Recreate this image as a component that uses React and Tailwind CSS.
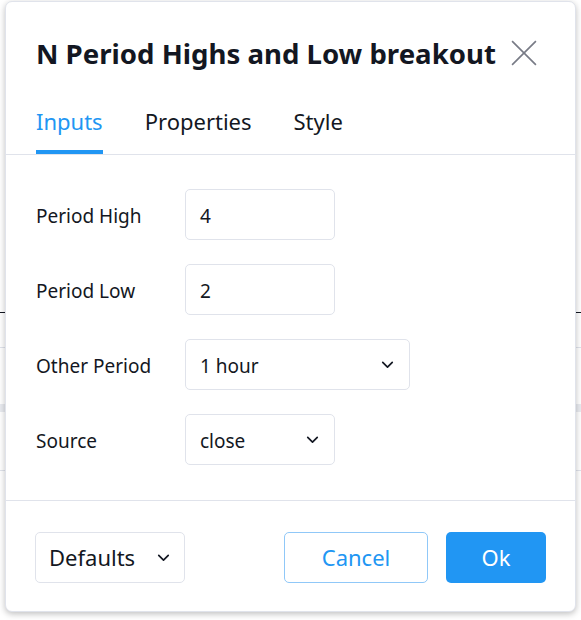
function Chevron({ className }) {
  return (
    <svg viewBox="0 0 18 18" className={className} fill="none" stroke="currentColor" strokeWidth="1.6" strokeLinecap="round" strokeLinejoin="round">
      <path d="M4.5 7l4.5 4.5L13.5 7" />
    </svg>
  )
}

function Row({ label, children }) {
  return (
    <div className="flex items-center h-[51px]">
      <div className="w-[149px] pt-[4px] text-[19px] text-[#131722]">{label}</div>
      {children}
    </div>
  )
}

function TextBox({ value }) {
  return (
    <div className="w-[150px] h-[51px] border border-[#e0e3eb] rounded-[5px] flex items-center px-[14px] pt-[4px] text-[19px] text-[#131722]">
      {value}
    </div>
  )
}

function Select({ value, width }) {
  return (
    <div className={`${width} h-[51px] border border-[#e0e3eb] rounded-[5px] flex items-center justify-between pl-[14px] pr-[12px] text-[19px] text-[#131722]`}>
      <span className="pt-[3px]">{value}</span>
      <Chevron className="w-[19px] h-[19px]" />
    </div>
  )
}

export default function App() {
  return (
    <div className="w-[581px] h-[620px] bg-white relative overflow-hidden" style={{ fontFamily: '"Noto Sans", "Open Sans", sans-serif' }}>
      <div className="absolute left-0 right-0 top-[312px] h-[1px] bg-[#131722]" />
      <div className="absolute left-0 right-0 top-[347px] h-[1px] bg-[#e0e3eb]" />
      <div className="absolute left-0 right-0 top-[404px] h-[8px] bg-[#e9ebf0]" />
      <div className="absolute left-0 right-0 top-[470px] h-[1px] bg-[#e0e3eb]" />
      <div className="absolute left-[5px] top-[1px] w-[571px] h-[611px] bg-white rounded-[7px] border border-[#e0e3eb] shadow-[0_2px_6px_rgba(0,0,0,0.25)] flex flex-col">
        <div className="pl-[30px] pr-[38px] pt-[29px] flex items-center justify-between h-[73px]">
          <div className="text-[27.6px] font-bold text-[#131722] leading-[44px] whitespace-nowrap">N Period Highs and Low breakout</div>
          <svg viewBox="0 0 24 24" className="w-[26px] h-[26px] text-[#787b86] shrink-0" fill="none" stroke="currentColor" strokeWidth="1.5">
            <path d="M1 1l22 22M23 1L1 23" />
          </svg>
        </div>
        <div className="mt-[22px] pl-[30px] flex gap-[42px] border-b border-[#e0e3eb] h-[58px]">
          <div className="h-full flex items-center pb-[4px] border-b-[4px] border-[#2196f3] text-[22px] text-[#2196f3]">Inputs</div>
          <div className="h-full flex items-center pb-[4px] border-b-[4px] border-transparent text-[22px] text-[#131722]">Properties</div>
          <div className="h-full flex items-center pb-[4px] border-b-[4px] border-transparent text-[22px] text-[#131722]">Style</div>
        </div>
        <div className="pl-[30px] pt-[34px] pb-[35px] flex flex-col gap-[24px] border-b border-[#e0e3eb]">
          <Row label="Period High"><TextBox value="4" /></Row>
          <Row label="Period Low"><TextBox value="2" /></Row>
          <Row label="Other Period"><Select value="1 hour" width="w-[225px]" /></Row>
          <Row label="Source"><Select value="close" width="w-[150px]" /></Row>
        </div>
        <div className="px-[29px] pt-[31px] flex items-center">
          <div className="w-[150px] h-[51px] border border-[#e0e3eb] rounded-[5px] flex items-center justify-between pl-[13px] pr-[11px] text-[22px] text-[#131722]">
            <span>Defaults</span>
            <Chevron className="w-[19px] h-[19px]" />
          </div>
          <div className="flex-1" />
          <div className="w-[144px] h-[51px] border border-[#90c8f8] rounded-[5px] flex items-center justify-center text-[22px] text-[#2196f3]">Cancel</div>
          <div className="ml-[18px] w-[100px] h-[51px] bg-[#2196f3] rounded-[5px] flex items-center justify-center text-[22px] text-white">Ok</div>
        </div>
      </div>
    </div>
  )
}
